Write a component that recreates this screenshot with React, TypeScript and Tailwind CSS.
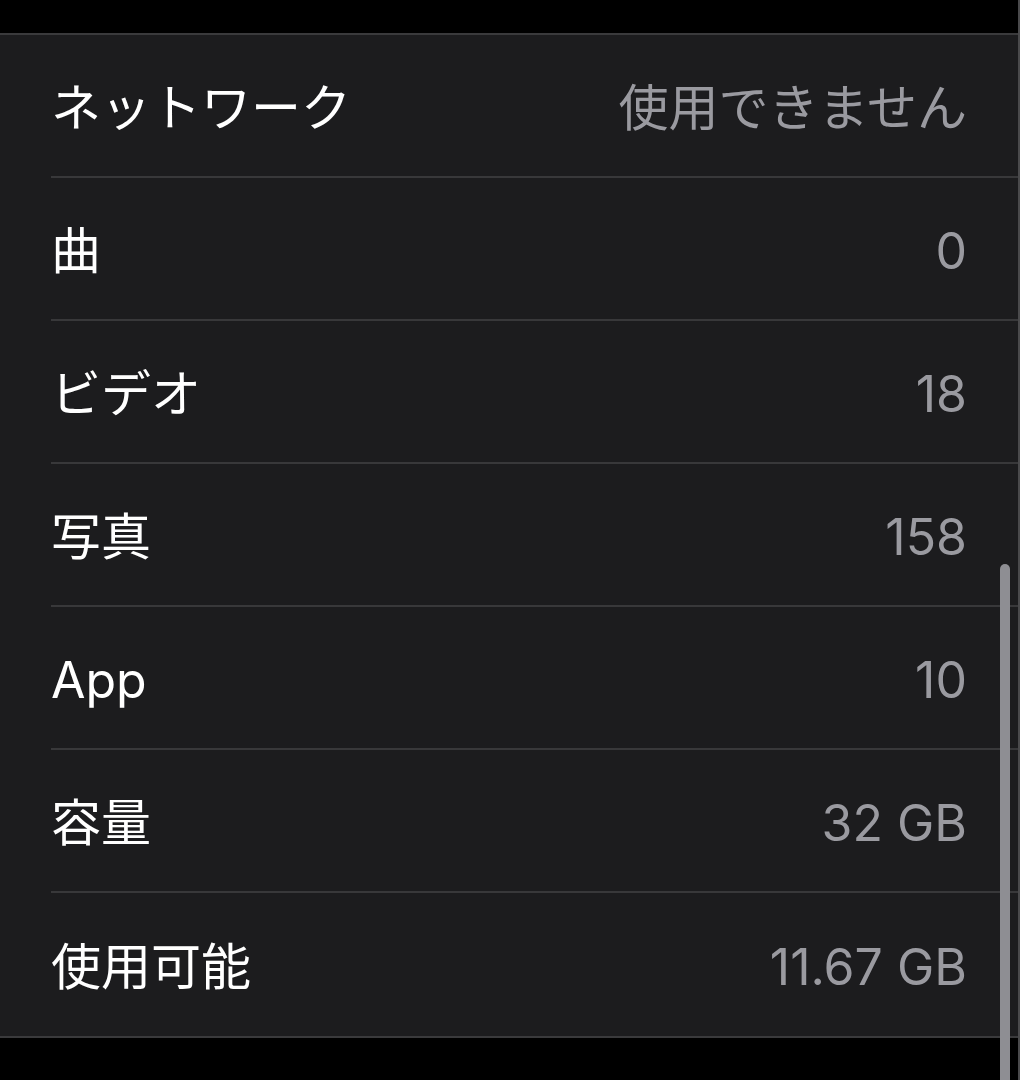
import React from "react";

const rows: { label: string; value: string }[] = [
  { label: "ネットワーク", value: "使用できません" },
  { label: "曲", value: "0" },
  { label: "ビデオ", value: "18" },
  { label: "写真", value: "158" },
  { label: "App", value: "10" },
  { label: "容量", value: "32 GB" },
  { label: "使用可能", value: "11.67 GB" },
];

export default function App() {
  return (
    <div
      className="relative h-[1080px] w-[1020px] overflow-hidden bg-black"
      style={{ fontFamily: 'Inter, "Noto Sans CJK JP", sans-serif' }}
    >
      <div className="h-[33px]" />
      <div className="border-y-2 border-[#3a3a3c] bg-[#1c1c1e]">
        {rows.map((row, i) => (
          <div key={row.label} className="pl-[51px]">
            <div
              className={
                "flex h-[143px] items-center justify-between pt-[4px] pr-[53px] " +
                (i < rows.length - 1 ? "border-b-2 border-[#38383a]" : "")
              }
            >
              <span className="text-[50px] leading-none text-white">{row.label}</span>
              <span className="text-[50px] leading-none text-[#9a9aa0]">{row.value}</span>
            </div>
          </div>
        ))}
      </div>

      {/* scroll indicator */}
      <div className="absolute left-[1000px] top-[564px] h-[540px] w-[10px] rounded-full bg-[#8e8e93]" />
      <div className="absolute right-0 top-0 h-full w-[2px] bg-[#4a4a4c]" />
    </div>
  );
}
